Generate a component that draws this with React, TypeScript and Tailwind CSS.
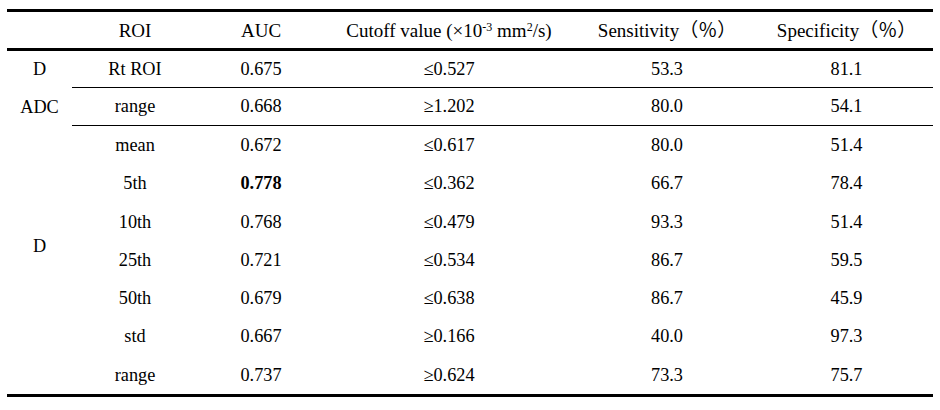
const cols = "grid grid-cols-[126px_126px_250px_186px_173px]";

const dRows = [
  { roi: "mean", auc: "0.672", cut: "≤0.617", sen: "80.0", spe: "51.4" },
  { roi: "5th", auc: "0.778", cut: "≤0.362", sen: "66.7", spe: "78.4", bold: true },
  { roi: "10th", auc: "0.768", cut: "≤0.479", sen: "93.3", spe: "51.4" },
  { roi: "25th", auc: "0.721", cut: "≤0.534", sen: "86.7", spe: "59.5" },
  { roi: "50th", auc: "0.679", cut: "≤0.638", sen: "86.7", spe: "45.9" },
  { roi: "std", auc: "0.667", cut: "≥0.166", sen: "40.0", spe: "97.3" },
  { roi: "range", auc: "0.737", cut: "≥0.624", sen: "73.3", spe: "75.7" },
];

type R = { roi: string; auc: string; cut: string; sen: string; spe: string; bold?: boolean };

function Row({ r, className }: { r: R; className: string }) {
  return (
    <div className={`${cols} items-center text-center ${className}`}>
      <div>{r.roi}</div>
      <div className={r.bold ? "font-bold" : ""}>{r.auc}</div>
      <div>{r.cut}</div>
      <div>{r.sen}</div>
      <div>{r.spe}</div>
    </div>
  );
}

export default function App() {
  return (
    <div className="font-['Liberation_Serif','Noto_Sans_CJK_SC',serif]">
      <div className="w-[940px] h-[410px] bg-white pt-[9px] pl-[7px] text-black text-[18.3px] leading-none">
        <div className="w-[926px] border-t-[3px] border-b-[3px] border-black">
          {/* header */}
          <div className="flex h-[39px] border-b-[3px] border-black text-center items-center text-[19px]">
            <div className="w-[65px]" />
            <div className={cols}>
              <div>ROI</div>
              <div>AUC</div>
              <div>
                Cutoff value (×10<sup className="text-[12px]">-3</sup> mm<sup className="text-[12px]">2</sup>/s)
              </div>
              <div>Sensitivity（％）</div>
              <div>Specificity（％）</div>
            </div>
          </div>

          {/* DADC */}
          <div className="flex">
            <div className="w-[65px] flex flex-col text-center">
              <div className="h-[37px] flex items-center justify-center">D</div>
              <div className="h-[38px] flex items-center justify-center">ADC</div>
            </div>
            <div className="flex flex-col">
              <Row r={{ roi: "Rt ROI", auc: "0.675", cut: "≤0.527", sen: "53.3", spe: "81.1" }} className="h-[37px] border-b border-black" />
              <Row r={{ roi: "range", auc: "0.668", cut: "≥1.202", sen: "80.0", spe: "54.1" }} className="h-[38px] border-b border-black" />
            </div>
          </div>

          {/* D */}
          <div className="flex">
            <div className="w-[65px] text-center pt-[111px]">D</div>
            <div className="flex flex-col">
              {dRows.map((r) => (
                <Row key={r.roi} r={r} className="h-[38.3px]" />
              ))}
            </div>
          </div>
        </div>
      </div>
    </div>
  );
}
